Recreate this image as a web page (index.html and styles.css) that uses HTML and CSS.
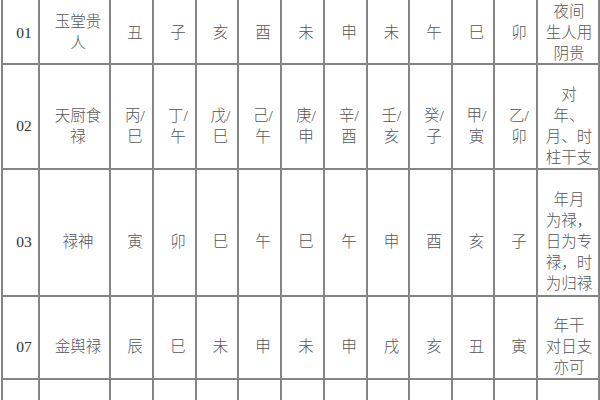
FILE: index.html
```html
<!DOCTYPE html>
<html lang="zh-CN">
<head>
<meta charset="utf-8">
<title>禄贵表</title>
<link rel="stylesheet" href="styles.css">
</head>
<body>
<div class="sheet">
  <div class="cell num">01</div>
  <div class="cell name">玉堂贵<br>人</div>
  <div class="cell">丑</div>
  <div class="cell">子</div>
  <div class="cell">亥</div>
  <div class="cell">酉</div>
  <div class="cell">未</div>
  <div class="cell">申</div>
  <div class="cell">未</div>
  <div class="cell">午</div>
  <div class="cell">巳</div>
  <div class="cell">卯</div>
  <div class="cell note">夜间<br>生人用<br>阴贵</div>

  <div class="cell num">02</div>
  <div class="cell name">天厨食<br>禄</div>
  <div class="cell">丙/<br>巳</div>
  <div class="cell">丁/<br>午</div>
  <div class="cell">戊/<br>巳</div>
  <div class="cell">己/<br>午</div>
  <div class="cell">庚/<br>申</div>
  <div class="cell">辛/<br>酉</div>
  <div class="cell">壬/<br>亥</div>
  <div class="cell">癸/<br>子</div>
  <div class="cell">甲/<br>寅</div>
  <div class="cell">乙/<br>卯</div>
  <div class="cell note">对<br>年、<br>月、时<br>柱干支</div>

  <div class="cell num">03</div>
  <div class="cell name">禄神</div>
  <div class="cell">寅</div>
  <div class="cell">卯</div>
  <div class="cell">巳</div>
  <div class="cell">午</div>
  <div class="cell">巳</div>
  <div class="cell">午</div>
  <div class="cell">申</div>
  <div class="cell">酉</div>
  <div class="cell">亥</div>
  <div class="cell">子</div>
  <div class="cell note">年月<br>为禄，<br>日为专<br>禄，时<br>为归禄</div>

  <div class="cell num">07</div>
  <div class="cell name">金舆禄</div>
  <div class="cell">辰</div>
  <div class="cell">巳</div>
  <div class="cell">未</div>
  <div class="cell">申</div>
  <div class="cell">未</div>
  <div class="cell">申</div>
  <div class="cell">戌</div>
  <div class="cell">亥</div>
  <div class="cell">丑</div>
  <div class="cell">寅</div>
  <div class="cell note">年干<br>对日支<br>亦可</div>

  <div class="cell num"></div>
  <div class="cell name"></div>
  <div class="cell"></div>
  <div class="cell"></div>
  <div class="cell"></div>
  <div class="cell"></div>
  <div class="cell"></div>
  <div class="cell"></div>
  <div class="cell"></div>
  <div class="cell"></div>
  <div class="cell"></div>
  <div class="cell"></div>
  <div class="cell note"></div>
</div>
</body>
</html>
```
FILE: styles.css
```css
html, body {
  margin: 0;
  padding: 0;
  background: #ffffff;
  overflow: hidden;
}

.sheet {
  display: grid;
  grid-template-columns: 35px 69px 41px 41px 40px 41px 41px 41px 40px 41px 40px 41px 60px;
  grid-template-rows: 80px 103px 125px 81px 80px;
  gap: 2px;
  padding: 2px;
  margin: -19px 0 0 1px;
  width: max-content;
  background: #858585;
  font-family: "Liberation Serif", "Noto Sans CJK SC", serif;
  font-size: 15.5px;
  font-weight: 300;
  line-height: 21px;
  color: #555555;
}

.cell {
  box-sizing: border-box;
  background: #ffffff;
  display: flex;
  align-items: center;
  justify-content: center;
  text-align: center;
  padding: 20px 0 2px 7px;
}

.num {
  color: #333333;
  font-weight: 400;
}

.note {
  padding-left: 2px;
}
```
